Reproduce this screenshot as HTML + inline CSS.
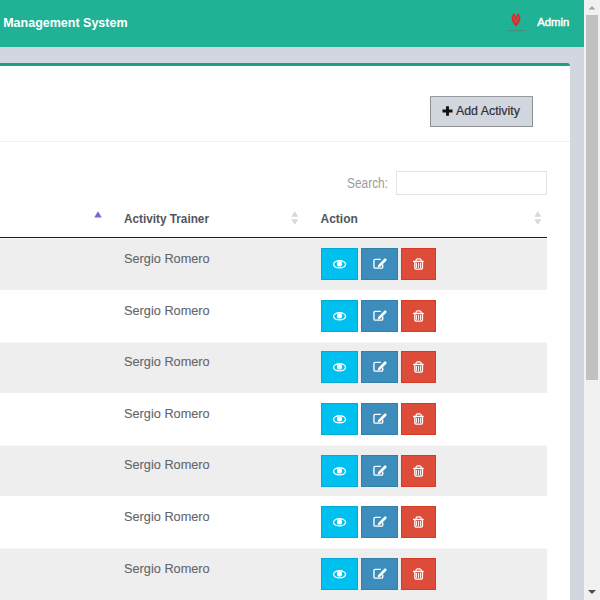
<!DOCTYPE html>
<html><head><meta charset="utf-8">
<style>
*{box-sizing:border-box;margin:0;padding:0}
html,body{width:600px;height:600px;overflow:hidden;background:#d2d6de;font-family:"Liberation Sans",sans-serif;position:relative}
.abs{position:absolute}
.t{white-space:nowrap;line-height:1;transform-origin:left top}
.btn{width:37px;height:32px;overflow:hidden}
.btn svg{position:absolute;left:-1px;top:-1px}
.b1{left:321px;background:#00c0ef;border:1px solid #00acd6}
.b2{left:361px;background:#3c8dbc;border:1px solid #367fa9}
.b3{left:401px;width:35px;background:#dd4b39;border:1px solid #d73925}
</style></head><body>
<div class="abs" style="left:0;top:0;width:584px;height:47px;background:#20b294"></div>
<div class="abs t" style="left:3.20px;top:16.92px;font-size:12.5px;font-weight:bold;color:#fff;transform:scaleX(1.0);">Management System</div>
<div class="abs t" style="left:537.30px;top:16.83px;font-size:11.3px;font-weight:normal;color:#fff;transform:scaleX(1.0);-webkit-text-stroke:0.45px #fff;">Admin</div>
<svg class="abs" style="left:505px;top:10px" width="24" height="24" viewBox="0 0 24 24">
<path d="M11 16.8 C8.6 14.2, 6.6 11.6, 6.6 8.6 C6.6 6.4, 7.6 4.4, 8.9 3.2 C9.9 3.6, 10.3 4.6, 10.4 5.8 L11 7.2 L11.6 5.8 C11.7 4.6, 12.1 3.6, 13.1 3.2 C14.4 4.4, 15.4 6.4, 15.4 8.6 C15.4 11.6, 13.4 14.2, 11 16.8 Z" fill="#cc3333"/>
<path d="M8.8 6.5 Q9.5 10 11 12 Q12.5 10 13.2 6.5" stroke="#e86a6a" stroke-width="0.7" fill="none" opacity="0.7"/>
<path d="M2.5 20.6 H20" stroke="#8a5050" stroke-width="1.3" opacity="0.35"/></svg>
<div class="abs" style="left:-5px;top:62.8px;width:575px;height:540px;background:#fff;border-top:3px solid #1ba083;border-radius:3px"></div>
<div class="abs" style="left:0;top:141px;width:570px;height:1.2px;background:#f2f2f2"></div>
<div class="abs" style="left:430.2px;top:95.8px;width:102.6px;height:31.2px;background:#d2d6de;border:1px solid #8f9094;border-top-color:#9a9b9e;border-radius:1px"></div>
<svg class="abs" style="left:442px;top:106px" width="11" height="10" viewBox="0 0 11 10"><path d="M0.5 5 H10.5 M5.5 0.3 V9.7" stroke="#111" stroke-width="2.9"/></svg>
<div class="abs t" style="left:455.50px;top:104.29px;font-size:13px;font-weight:normal;color:#2f2f35;transform:scaleX(0.95);-webkit-text-stroke:0.2px #2f2f35;">Add Activity</div>
<div class="abs t" style="left:347.30px;top:175.95px;font-size:14px;font-weight:normal;color:#9c9c9c;transform:scaleX(0.85);">Search:</div>
<div class="abs" style="left:396px;top:171px;width:151px;height:24px;border:1px solid #e2e2e2;background:#fff"></div>
<div class="abs t" style="left:123.75px;top:212.84px;font-size:12px;font-weight:bold;color:#52565b;transform:scaleX(0.98);">Activity Trainer</div>
<div class="abs t" style="left:320.50px;top:212.84px;font-size:12px;font-weight:bold;color:#52565b;transform:scaleX(1.0);">Action</div>
<svg class="abs" style="left:291px;top:211px" width="8" height="14" viewBox="0 0 8 14"><path d="M0.3 5.8 L3.8 0.3 L7.3 5.8 Z M0.3 8.2 L3.8 13.7 L7.3 8.2 Z" fill="#d8d8d8"/></svg>
<svg class="abs" style="left:533.7px;top:211px" width="8" height="14" viewBox="0 0 8 14"><path d="M0.3 5.8 L3.8 0.3 L7.3 5.8 Z M0.3 8.2 L3.8 13.7 L7.3 8.2 Z" fill="#d8d8d8"/></svg>
<svg class="abs" style="left:94px;top:211px" width="8" height="7" viewBox="0 0 8 7"><path d="M0.2 6.5 L4 0.2 L7.8 6.5 Z" fill="#746ad6"/></svg>
<div class="abs" style="left:0;top:236.8px;width:547px;height:1.6px;background:#1a1a1a"></div>
<div class="abs" style="left:0;top:238.45px;width:547px;height:51.6px;background:#eeeeee;border-top:1.5px solid #f8f8f8"></div>
<div class="abs t" style="left:124.20px;top:252.02px;font-size:13.5px;font-weight:normal;color:#62666b;transform:scaleX(0.944);-webkit-text-stroke:0.1px #62666b;">Sergio Romero</div>
<div class="abs btn b1" style="top:248.25px"><svg width="37" height="32" viewBox="0 0 37 32"><ellipse cx="18.55" cy="16.3" rx="6.0" ry="3.55" fill="none" stroke="#fff" stroke-width="1.4"/><circle cx="18.5" cy="15.9" r="2.6" fill="#fff"/></svg></div>
<div class="abs btn b2" style="top:248.25px"><svg width="37" height="32" viewBox="0 0 37 32"><path d="M19.8 11.35 H14.2 Q12.95 11.35 12.95 12.6 V18.9 Q12.95 20.15 14.2 20.15 H20.5 Q21.75 20.15 21.75 18.9 V16.6" fill="none" stroke="#fff" stroke-width="1.35"/><path d="M23.3 10.7 Q24.1 9.9 24.9 10.7 L25.3 11.1 Q26.1 11.9 25.3 12.7 L19.12 18.72 L16.6 19.4 L17.28 16.88 Z" fill="#fff"/></svg></div>
<div class="abs btn b3" style="top:248.25px"><svg width="35" height="32" viewBox="0 0 35 32"><path d="M12 13.4 H22.7" stroke="#fff" stroke-width="1.3"/><path d="M15 13.4 V12.2 Q15.3 10.9 16.6 10.9 H18.6 Q19.9 10.9 20.2 12.2 V13.4" fill="none" stroke="#fff" stroke-width="1.2"/><path d="M13.85 13.4 V19.8 Q13.85 21.1 15.1 21.1 H20.2 Q21.45 21.1 21.45 19.8 V13.4" fill="none" stroke="#fff" stroke-width="1.35"/><path d="M15.5 14.8 V19.9 M17.5 14.8 V19.9 M19.5 14.8 V19.9" stroke="#fff" stroke-width="0.9"/></svg></div>
<div class="abs t" style="left:124.20px;top:303.62px;font-size:13.5px;font-weight:normal;color:#62666b;transform:scaleX(0.944);-webkit-text-stroke:0.1px #62666b;">Sergio Romero</div>
<div class="abs btn b1" style="top:299.85px"><svg width="37" height="32" viewBox="0 0 37 32"><ellipse cx="18.55" cy="16.3" rx="6.0" ry="3.55" fill="none" stroke="#fff" stroke-width="1.4"/><circle cx="18.5" cy="15.9" r="2.6" fill="#fff"/></svg></div>
<div class="abs btn b2" style="top:299.85px"><svg width="37" height="32" viewBox="0 0 37 32"><path d="M19.8 11.35 H14.2 Q12.95 11.35 12.95 12.6 V18.9 Q12.95 20.15 14.2 20.15 H20.5 Q21.75 20.15 21.75 18.9 V16.6" fill="none" stroke="#fff" stroke-width="1.35"/><path d="M23.3 10.7 Q24.1 9.9 24.9 10.7 L25.3 11.1 Q26.1 11.9 25.3 12.7 L19.12 18.72 L16.6 19.4 L17.28 16.88 Z" fill="#fff"/></svg></div>
<div class="abs btn b3" style="top:299.85px"><svg width="35" height="32" viewBox="0 0 35 32"><path d="M12 13.4 H22.7" stroke="#fff" stroke-width="1.3"/><path d="M15 13.4 V12.2 Q15.3 10.9 16.6 10.9 H18.6 Q19.9 10.9 20.2 12.2 V13.4" fill="none" stroke="#fff" stroke-width="1.2"/><path d="M13.85 13.4 V19.8 Q13.85 21.1 15.1 21.1 H20.2 Q21.45 21.1 21.45 19.8 V13.4" fill="none" stroke="#fff" stroke-width="1.35"/><path d="M15.5 14.8 V19.9 M17.5 14.8 V19.9 M19.5 14.8 V19.9" stroke="#fff" stroke-width="0.9"/></svg></div>
<div class="abs" style="left:0;top:341.65px;width:547px;height:51.6px;background:#eeeeee;border-top:1.5px solid #f8f8f8"></div>
<div class="abs t" style="left:124.20px;top:355.22px;font-size:13.5px;font-weight:normal;color:#62666b;transform:scaleX(0.944);-webkit-text-stroke:0.1px #62666b;">Sergio Romero</div>
<div class="abs btn b1" style="top:351.45px"><svg width="37" height="32" viewBox="0 0 37 32"><ellipse cx="18.55" cy="16.3" rx="6.0" ry="3.55" fill="none" stroke="#fff" stroke-width="1.4"/><circle cx="18.5" cy="15.9" r="2.6" fill="#fff"/></svg></div>
<div class="abs btn b2" style="top:351.45px"><svg width="37" height="32" viewBox="0 0 37 32"><path d="M19.8 11.35 H14.2 Q12.95 11.35 12.95 12.6 V18.9 Q12.95 20.15 14.2 20.15 H20.5 Q21.75 20.15 21.75 18.9 V16.6" fill="none" stroke="#fff" stroke-width="1.35"/><path d="M23.3 10.7 Q24.1 9.9 24.9 10.7 L25.3 11.1 Q26.1 11.9 25.3 12.7 L19.12 18.72 L16.6 19.4 L17.28 16.88 Z" fill="#fff"/></svg></div>
<div class="abs btn b3" style="top:351.45px"><svg width="35" height="32" viewBox="0 0 35 32"><path d="M12 13.4 H22.7" stroke="#fff" stroke-width="1.3"/><path d="M15 13.4 V12.2 Q15.3 10.9 16.6 10.9 H18.6 Q19.9 10.9 20.2 12.2 V13.4" fill="none" stroke="#fff" stroke-width="1.2"/><path d="M13.85 13.4 V19.8 Q13.85 21.1 15.1 21.1 H20.2 Q21.45 21.1 21.45 19.8 V13.4" fill="none" stroke="#fff" stroke-width="1.35"/><path d="M15.5 14.8 V19.9 M17.5 14.8 V19.9 M19.5 14.8 V19.9" stroke="#fff" stroke-width="0.9"/></svg></div>
<div class="abs t" style="left:124.20px;top:406.82px;font-size:13.5px;font-weight:normal;color:#62666b;transform:scaleX(0.944);-webkit-text-stroke:0.1px #62666b;">Sergio Romero</div>
<div class="abs btn b1" style="top:403.05px"><svg width="37" height="32" viewBox="0 0 37 32"><ellipse cx="18.55" cy="16.3" rx="6.0" ry="3.55" fill="none" stroke="#fff" stroke-width="1.4"/><circle cx="18.5" cy="15.9" r="2.6" fill="#fff"/></svg></div>
<div class="abs btn b2" style="top:403.05px"><svg width="37" height="32" viewBox="0 0 37 32"><path d="M19.8 11.35 H14.2 Q12.95 11.35 12.95 12.6 V18.9 Q12.95 20.15 14.2 20.15 H20.5 Q21.75 20.15 21.75 18.9 V16.6" fill="none" stroke="#fff" stroke-width="1.35"/><path d="M23.3 10.7 Q24.1 9.9 24.9 10.7 L25.3 11.1 Q26.1 11.9 25.3 12.7 L19.12 18.72 L16.6 19.4 L17.28 16.88 Z" fill="#fff"/></svg></div>
<div class="abs btn b3" style="top:403.05px"><svg width="35" height="32" viewBox="0 0 35 32"><path d="M12 13.4 H22.7" stroke="#fff" stroke-width="1.3"/><path d="M15 13.4 V12.2 Q15.3 10.9 16.6 10.9 H18.6 Q19.9 10.9 20.2 12.2 V13.4" fill="none" stroke="#fff" stroke-width="1.2"/><path d="M13.85 13.4 V19.8 Q13.85 21.1 15.1 21.1 H20.2 Q21.45 21.1 21.45 19.8 V13.4" fill="none" stroke="#fff" stroke-width="1.35"/><path d="M15.5 14.8 V19.9 M17.5 14.8 V19.9 M19.5 14.8 V19.9" stroke="#fff" stroke-width="0.9"/></svg></div>
<div class="abs" style="left:0;top:444.85px;width:547px;height:51.6px;background:#eeeeee;border-top:1.5px solid #f8f8f8"></div>
<div class="abs t" style="left:124.20px;top:458.42px;font-size:13.5px;font-weight:normal;color:#62666b;transform:scaleX(0.944);-webkit-text-stroke:0.1px #62666b;">Sergio Romero</div>
<div class="abs btn b1" style="top:454.65px"><svg width="37" height="32" viewBox="0 0 37 32"><ellipse cx="18.55" cy="16.3" rx="6.0" ry="3.55" fill="none" stroke="#fff" stroke-width="1.4"/><circle cx="18.5" cy="15.9" r="2.6" fill="#fff"/></svg></div>
<div class="abs btn b2" style="top:454.65px"><svg width="37" height="32" viewBox="0 0 37 32"><path d="M19.8 11.35 H14.2 Q12.95 11.35 12.95 12.6 V18.9 Q12.95 20.15 14.2 20.15 H20.5 Q21.75 20.15 21.75 18.9 V16.6" fill="none" stroke="#fff" stroke-width="1.35"/><path d="M23.3 10.7 Q24.1 9.9 24.9 10.7 L25.3 11.1 Q26.1 11.9 25.3 12.7 L19.12 18.72 L16.6 19.4 L17.28 16.88 Z" fill="#fff"/></svg></div>
<div class="abs btn b3" style="top:454.65px"><svg width="35" height="32" viewBox="0 0 35 32"><path d="M12 13.4 H22.7" stroke="#fff" stroke-width="1.3"/><path d="M15 13.4 V12.2 Q15.3 10.9 16.6 10.9 H18.6 Q19.9 10.9 20.2 12.2 V13.4" fill="none" stroke="#fff" stroke-width="1.2"/><path d="M13.85 13.4 V19.8 Q13.85 21.1 15.1 21.1 H20.2 Q21.45 21.1 21.45 19.8 V13.4" fill="none" stroke="#fff" stroke-width="1.35"/><path d="M15.5 14.8 V19.9 M17.5 14.8 V19.9 M19.5 14.8 V19.9" stroke="#fff" stroke-width="0.9"/></svg></div>
<div class="abs t" style="left:124.20px;top:510.02px;font-size:13.5px;font-weight:normal;color:#62666b;transform:scaleX(0.944);-webkit-text-stroke:0.1px #62666b;">Sergio Romero</div>
<div class="abs btn b1" style="top:506.25px"><svg width="37" height="32" viewBox="0 0 37 32"><ellipse cx="18.55" cy="16.3" rx="6.0" ry="3.55" fill="none" stroke="#fff" stroke-width="1.4"/><circle cx="18.5" cy="15.9" r="2.6" fill="#fff"/></svg></div>
<div class="abs btn b2" style="top:506.25px"><svg width="37" height="32" viewBox="0 0 37 32"><path d="M19.8 11.35 H14.2 Q12.95 11.35 12.95 12.6 V18.9 Q12.95 20.15 14.2 20.15 H20.5 Q21.75 20.15 21.75 18.9 V16.6" fill="none" stroke="#fff" stroke-width="1.35"/><path d="M23.3 10.7 Q24.1 9.9 24.9 10.7 L25.3 11.1 Q26.1 11.9 25.3 12.7 L19.12 18.72 L16.6 19.4 L17.28 16.88 Z" fill="#fff"/></svg></div>
<div class="abs btn b3" style="top:506.25px"><svg width="35" height="32" viewBox="0 0 35 32"><path d="M12 13.4 H22.7" stroke="#fff" stroke-width="1.3"/><path d="M15 13.4 V12.2 Q15.3 10.9 16.6 10.9 H18.6 Q19.9 10.9 20.2 12.2 V13.4" fill="none" stroke="#fff" stroke-width="1.2"/><path d="M13.85 13.4 V19.8 Q13.85 21.1 15.1 21.1 H20.2 Q21.45 21.1 21.45 19.8 V13.4" fill="none" stroke="#fff" stroke-width="1.35"/><path d="M15.5 14.8 V19.9 M17.5 14.8 V19.9 M19.5 14.8 V19.9" stroke="#fff" stroke-width="0.9"/></svg></div>
<div class="abs" style="left:0;top:548.05px;width:547px;height:51.6px;background:#eeeeee;border-top:1.5px solid #f8f8f8"></div>
<div class="abs t" style="left:124.20px;top:561.62px;font-size:13.5px;font-weight:normal;color:#62666b;transform:scaleX(0.944);-webkit-text-stroke:0.1px #62666b;">Sergio Romero</div>
<div class="abs btn b1" style="top:557.85px"><svg width="37" height="32" viewBox="0 0 37 32"><ellipse cx="18.55" cy="16.3" rx="6.0" ry="3.55" fill="none" stroke="#fff" stroke-width="1.4"/><circle cx="18.5" cy="15.9" r="2.6" fill="#fff"/></svg></div>
<div class="abs btn b2" style="top:557.85px"><svg width="37" height="32" viewBox="0 0 37 32"><path d="M19.8 11.35 H14.2 Q12.95 11.35 12.95 12.6 V18.9 Q12.95 20.15 14.2 20.15 H20.5 Q21.75 20.15 21.75 18.9 V16.6" fill="none" stroke="#fff" stroke-width="1.35"/><path d="M23.3 10.7 Q24.1 9.9 24.9 10.7 L25.3 11.1 Q26.1 11.9 25.3 12.7 L19.12 18.72 L16.6 19.4 L17.28 16.88 Z" fill="#fff"/></svg></div>
<div class="abs btn b3" style="top:557.85px"><svg width="35" height="32" viewBox="0 0 35 32"><path d="M12 13.4 H22.7" stroke="#fff" stroke-width="1.3"/><path d="M15 13.4 V12.2 Q15.3 10.9 16.6 10.9 H18.6 Q19.9 10.9 20.2 12.2 V13.4" fill="none" stroke="#fff" stroke-width="1.2"/><path d="M13.85 13.4 V19.8 Q13.85 21.1 15.1 21.1 H20.2 Q21.45 21.1 21.45 19.8 V13.4" fill="none" stroke="#fff" stroke-width="1.35"/><path d="M15.5 14.8 V19.9 M17.5 14.8 V19.9 M19.5 14.8 V19.9" stroke="#fff" stroke-width="0.9"/></svg></div>
<div class="abs t" style="left:124.20px;top:613.22px;font-size:13.5px;font-weight:normal;color:#62666b;transform:scaleX(0.944);-webkit-text-stroke:0.1px #62666b;">Sergio Romero</div>
<div class="abs btn b1" style="top:609.45px"><svg width="37" height="32" viewBox="0 0 37 32"><ellipse cx="18.55" cy="16.3" rx="6.0" ry="3.55" fill="none" stroke="#fff" stroke-width="1.4"/><circle cx="18.5" cy="15.9" r="2.6" fill="#fff"/></svg></div>
<div class="abs btn b2" style="top:609.45px"><svg width="37" height="32" viewBox="0 0 37 32"><path d="M19.8 11.35 H14.2 Q12.95 11.35 12.95 12.6 V18.9 Q12.95 20.15 14.2 20.15 H20.5 Q21.75 20.15 21.75 18.9 V16.6" fill="none" stroke="#fff" stroke-width="1.35"/><path d="M23.3 10.7 Q24.1 9.9 24.9 10.7 L25.3 11.1 Q26.1 11.9 25.3 12.7 L19.12 18.72 L16.6 19.4 L17.28 16.88 Z" fill="#fff"/></svg></div>
<div class="abs btn b3" style="top:609.45px"><svg width="35" height="32" viewBox="0 0 35 32"><path d="M12 13.4 H22.7" stroke="#fff" stroke-width="1.3"/><path d="M15 13.4 V12.2 Q15.3 10.9 16.6 10.9 H18.6 Q19.9 10.9 20.2 12.2 V13.4" fill="none" stroke="#fff" stroke-width="1.2"/><path d="M13.85 13.4 V19.8 Q13.85 21.1 15.1 21.1 H20.2 Q21.45 21.1 21.45 19.8 V13.4" fill="none" stroke="#fff" stroke-width="1.35"/><path d="M15.5 14.8 V19.9 M17.5 14.8 V19.9 M19.5 14.8 V19.9" stroke="#fff" stroke-width="0.9"/></svg></div>
<div class="abs" style="left:584px;top:0;width:16px;height:600px;background:#f1f1f1"></div>
<div class="abs" style="left:586px;top:15px;width:12px;height:365px;background:#c1c1c1"></div>
<svg class="abs" style="left:584px;top:0" width="16" height="16" viewBox="0 0 16 16"><path d="M4.6 9.5 L8 6 L11.4 9.5 Z" fill="#a3a3a3"/></svg>
<svg class="abs" style="left:584px;top:584px" width="16" height="16" viewBox="0 0 16 16"><path d="M4 6 L8 10 L12 6 Z" fill="#505050"/></svg>
</body></html>
